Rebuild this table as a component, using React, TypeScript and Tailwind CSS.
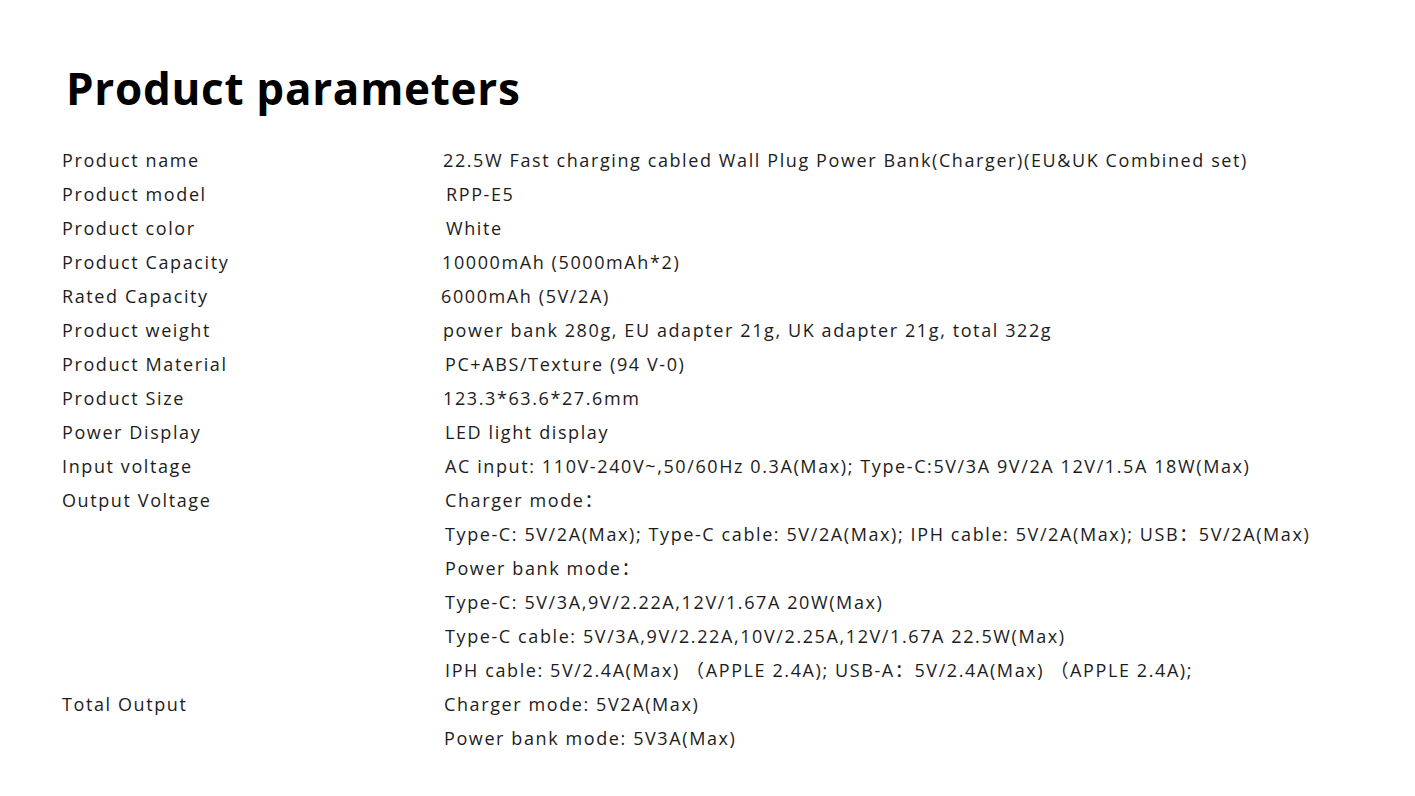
const rows: { label: string; values: string[]; shift?: string }[] = [
  { label: "Product name", values: ["22.5W Fast charging cabled Wall Plug Power Bank(Charger)(EU&UK Combined set)"] },
  { label: "Product model", values: ["RPP-E5"], shift: "pl-[3px]" },
  { label: "Product color", values: ["White"], shift: "pl-[3px]" },
  { label: "Product Capacity", values: ["10000mAh (5000mAh*2)"], shift: "-ml-[1px]" },
  { label: "Rated Capacity", values: ["6000mAh (5V/2A)"], shift: "-ml-[2px]" },
  { label: "Product weight", values: ["power bank 280g, EU adapter 21g, UK adapter 21g, total 322g"] },
  { label: "Product Material", values: ["PC+ABS/Texture (94 V-0)"], shift: "pl-[2px]" },
  { label: "Product Size", values: ["123.3*63.6*27.6mm"] },
  { label: "Power Display", values: ["LED light display"], shift: "pl-[2px]" },
  {
    label: "Input voltage",
    values: ["AC input: 110V-240V~,50/60Hz 0.3A(Max); Type-C:5V/3A 9V/2A 12V/1.5A 18W(Max)"],
    shift: "pl-[2px]",
  },
  {
    label: "Output Voltage",
    values: [
      "Charger mode：",
      "Type-C: 5V/2A(Max); Type-C cable: 5V/2A(Max); IPH cable: 5V/2A(Max); USB：5V/2A(Max)",
      "Power bank mode：",
      "Type-C: 5V/3A,9V/2.22A,12V/1.67A 20W(Max)",
      "Type-C cable: 5V/3A,9V/2.22A,10V/2.25A,12V/1.67A 22.5W(Max)",
      "IPH cable: 5V/2.4A(Max) （APPLE 2.4A); USB-A：5V/2.4A(Max) （APPLE 2.4A);",
    ],
    shift: "pl-[2px]",
  },
  { label: "Total Output", values: ["Charger mode: 5V2A(Max)", "Power bank mode: 5V3A(Max)"], shift: "pl-[1px]" },
];

export default function App() {
  return (
    <div className="min-h-screen bg-white font-['Open_Sans','Noto_Sans_CJK_SC',sans-serif]">
      <div className="pl-[62px] pt-[58px]">
        <h1 className="pl-[4px] text-[44px] font-bold leading-[60px] tracking-[0.7px] text-black">
          Product parameters
        </h1>

        <div className="mt-[25px] text-[18px] leading-[34px] tracking-[1.6px] text-[#1c1c1c]">
          {rows.map((row) => (
            <div key={row.label} className="grid grid-cols-[381px_1fr]">
              <div>{row.label}</div>
              <div className={row.shift}>
                {row.values.map((v) => (
                  <div key={v} className="whitespace-nowrap">
                    {v}
                  </div>
                ))}
              </div>
            </div>
          ))}
        </div>
      </div>
    </div>
  );
}
